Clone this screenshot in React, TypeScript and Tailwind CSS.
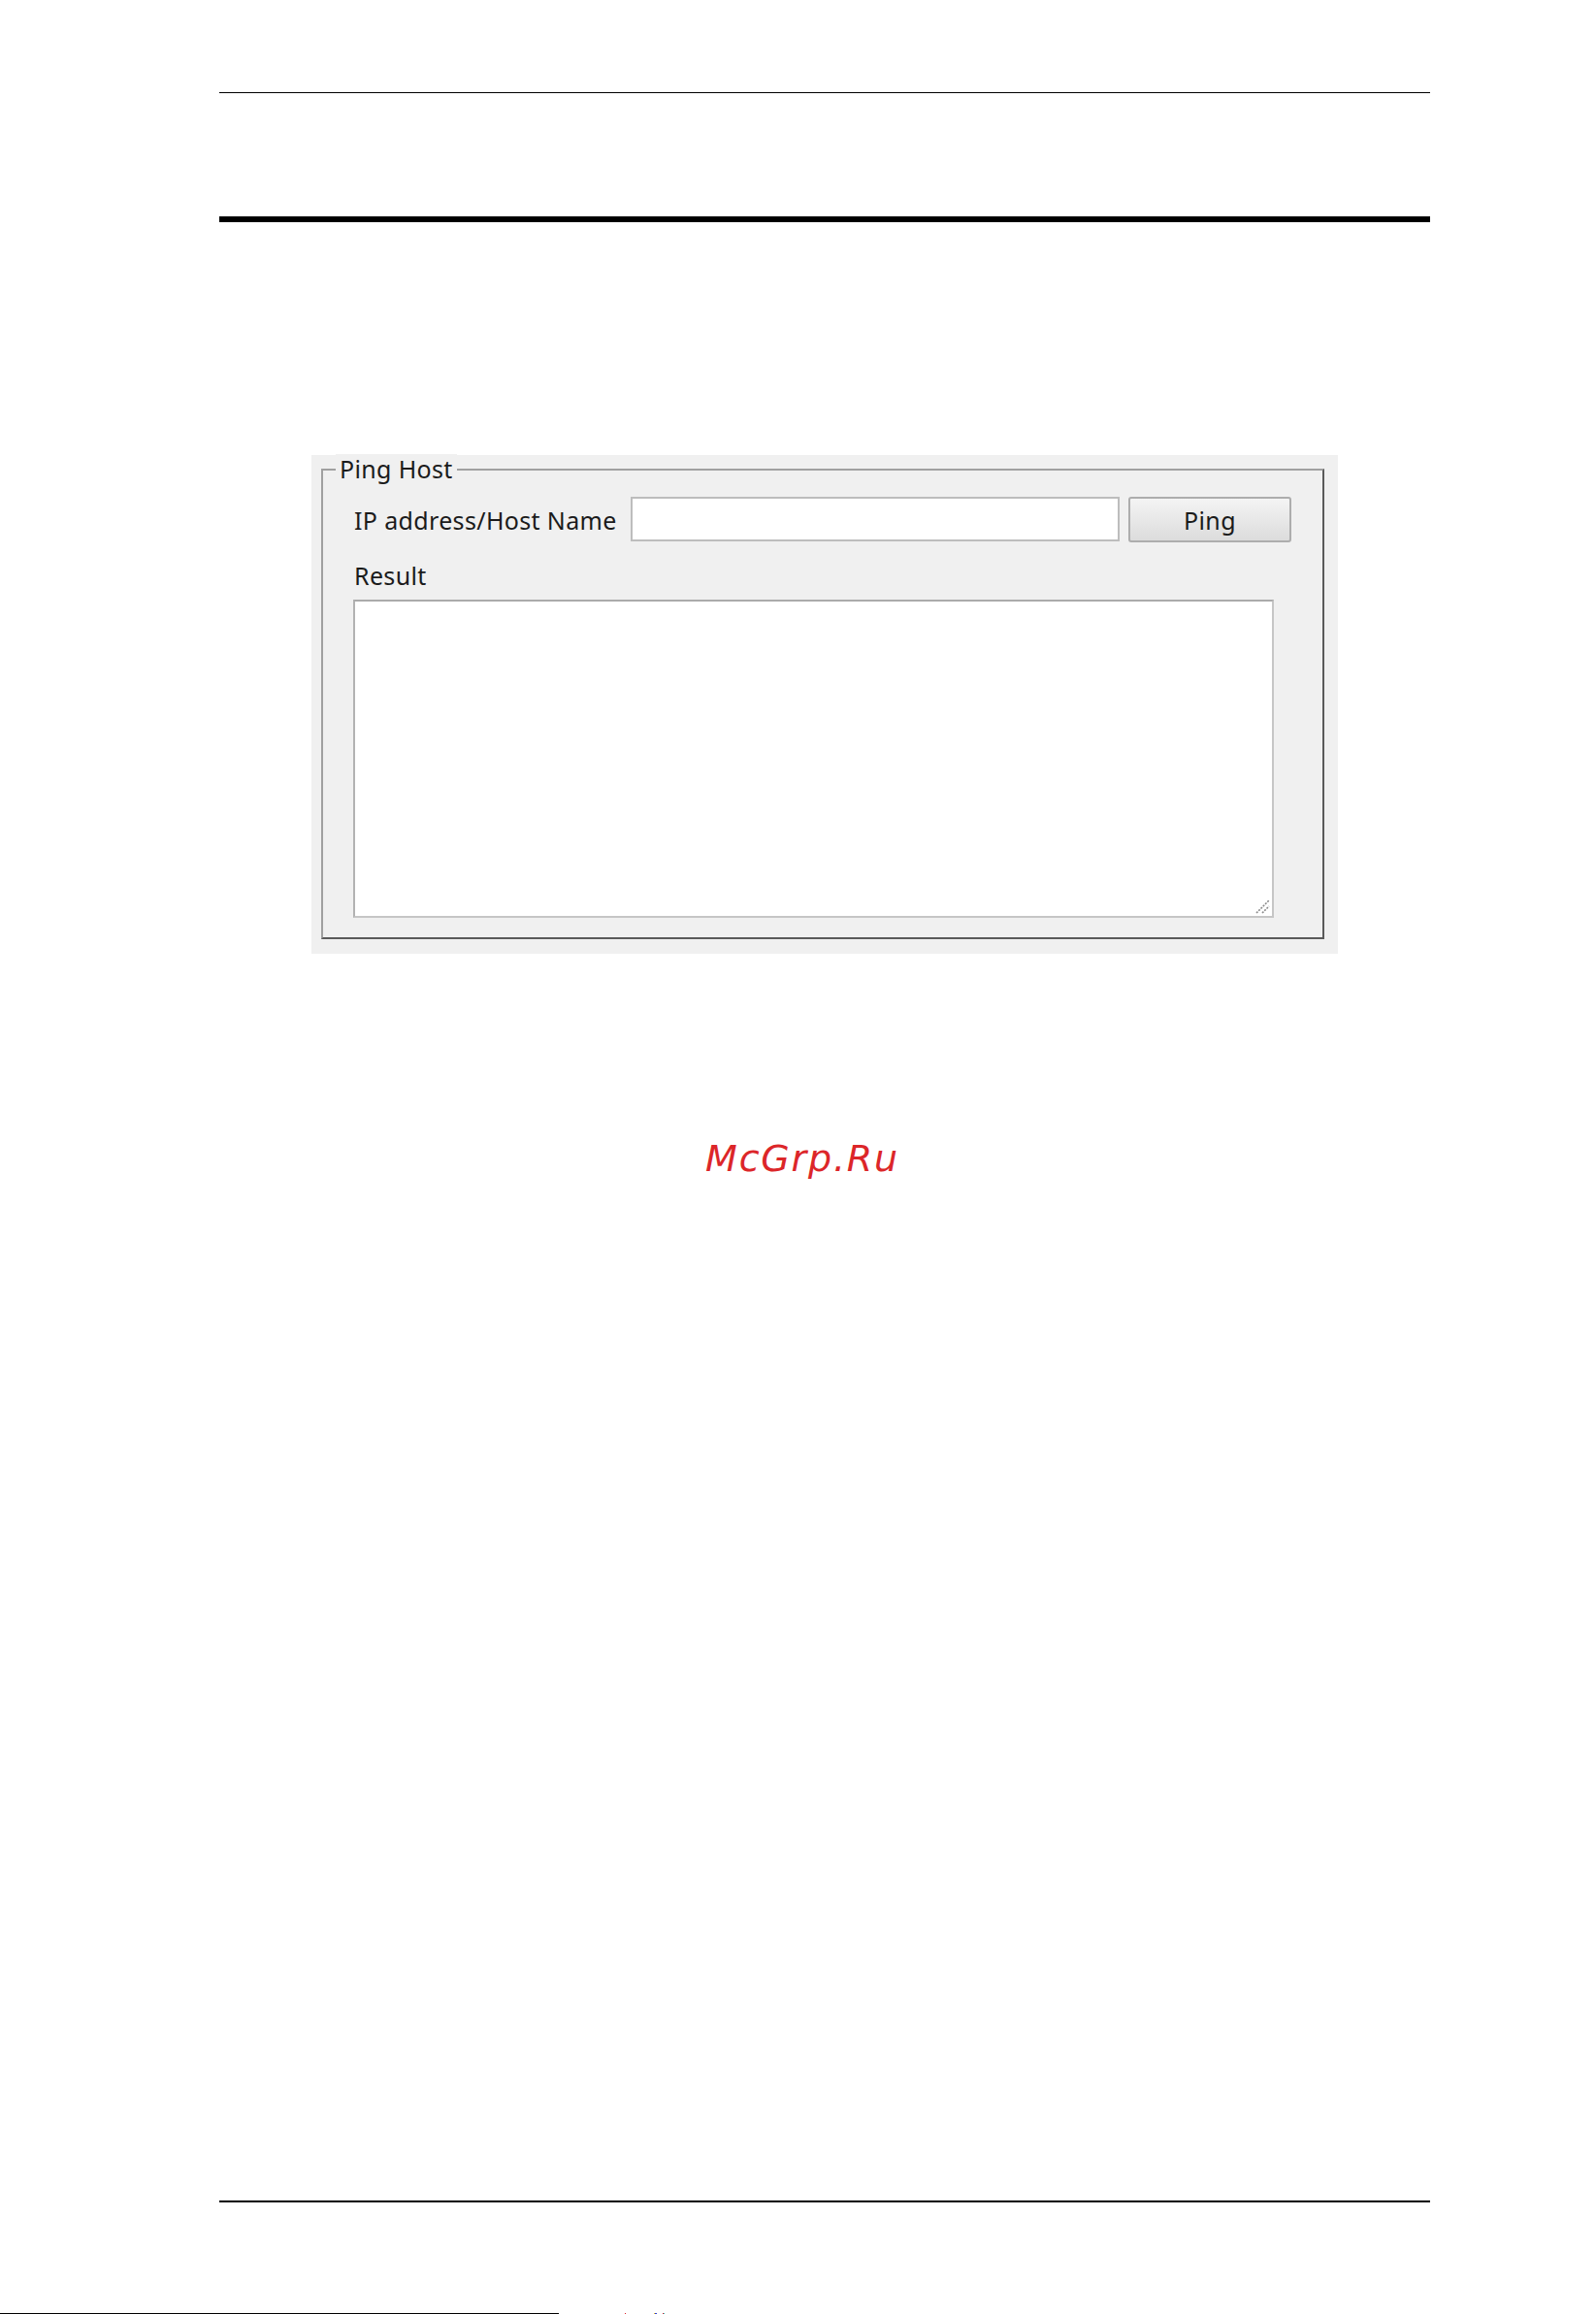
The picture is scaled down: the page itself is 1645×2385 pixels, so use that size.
import React from "react";

const ui = { fontFamily: '"Noto Sans", "Open Sans", sans-serif' };

export default function App() {
  return (
    <div className="w-[1645px] h-[2385px] bg-white flex flex-col overflow-hidden">
      <div className="ml-[226px] mt-[95px] w-[1248px] h-px bg-black" />
      <div className="ml-[226px] mt-[127px] w-[1248px] h-[6px] bg-black" />

      <div className="ml-[321px] mt-[240px] w-[1058px] h-[514px] bg-[#f0f0f0] pt-[14px] pl-[10px] pr-[14px] pb-[15px]">
        <div
          className="relative h-[485px] border-2 border-l-[#a0a0a0] border-t-[#a0a0a0] border-r-[#5a5a5a] border-b-[#5a5a5a] pt-[27px] pl-[32px] pr-[30px] pb-[20px] text-[25px] leading-[30px] tracking-[0.35px] text-[#1b1b1b]"
          style={ui}
        >
          <div className="absolute left-[13px] top-[-17px] px-[4px] bg-[#f0f0f0] leading-[30px]">
            Ping Host
          </div>

          <div className="flex items-center h-[47px]">
            <div className="w-[285px] shrink-0 whitespace-nowrap">IP address/Host Name</div>
            <input
              type="text"
              className="self-start w-[504px] h-[46px] shrink-0 bg-white border-2 border-[#bdbdbd] outline-none"
            />
            <button
              type="button"
              className="self-start ml-[9px] w-[168px] h-[47px] shrink-0 rounded-[3px] border-2 border-[#adadad] bg-gradient-to-b from-[#f4f4f4] to-[#dcdcdc] text-[25px] leading-[30px] tracking-[0.35px] text-[#1b1b1b]"
              style={ui}
            >
              Ping
            </button>
          </div>

          <div className="mt-[19px] h-[30px]">Result</div>

          <div className="relative mt-[10px] -ml-px w-[949px] h-[328px]">
            <textarea className="block w-full h-full bg-white border-2 border-t-[#ababab] border-l-[#b2b2b2] border-r-[#c6c6c6] border-b-[#c6c6c6] outline-none resize-none" />
            <svg
              className="absolute right-[3px] bottom-[3px]"
              width="17"
              height="17"
              viewBox="0 0 17 17"
            >
              <line x1="2" y1="15" x2="15" y2="2" stroke="#8a8a8a" strokeWidth="1.6" strokeDasharray="2 1.2" />
              <line x1="8" y1="15" x2="15" y2="8" stroke="#8a8a8a" strokeWidth="1.6" strokeDasharray="2 1.2" />
            </svg>
          </div>
        </div>
      </div>

      <div
        className="mt-[189px] w-full pl-[9px] text-center italic text-[38px] leading-[44px] tracking-[1.8px] text-[#dc2629]"
        style={{ fontFamily: '"DejaVu Sans", sans-serif' }}
      >
        McGrp.Ru
      </div>

      <div className="ml-[226px] mt-[1052px] w-[1248px] h-[2px] bg-black" />

      <div className="mt-auto flex h-px">
        <div className="w-[576px] h-px bg-black" />
        <div className="ml-[68px] w-px h-px bg-[#e0202a]" />
        <div className="ml-[29px] w-px h-px bg-[#e8c020]" />
        <div className="w-[2px] h-px bg-[#3040d0]" />
        <div className="ml-[6px] w-px h-px bg-[#e0202a]" />
        <div className="w-px h-px bg-[#30c0c0]" />
      </div>
    </div>
  );
}
